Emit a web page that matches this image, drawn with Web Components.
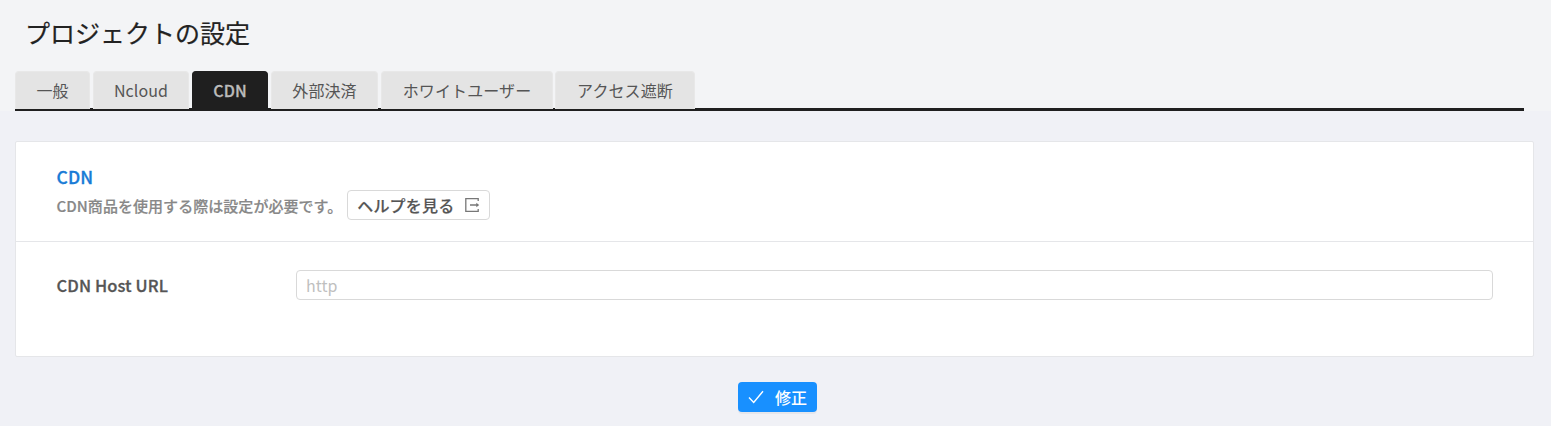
<!DOCTYPE html>
<html lang="ja">
<head>
<meta charset="utf-8">
<title>プロジェクトの設定</title>
<style>
html, body { margin: 0; }
body { background: #f0f1f6; font-family: "Noto Sans CJK JP", "Noto Sans", sans-serif; font-size: 16px; color: #555; height: 426px; overflow: hidden; }
</style>
</head>
<body>
<settings-page></settings-page>
<script>
function define(name, html) {
  const t = document.createElement('template');
  t.innerHTML = html;
  customElements.define(name, class extends HTMLElement {
    constructor() {
      super();
      this.attachShadow({ mode: 'open' }).append(t.content.cloneNode(true));
    }
  });
}

define('tab-item', `<style>
:host { display: block; box-sizing: border-box; width: var(--w); height: 38px; text-align: center; border: 1px solid #e8e8e8; border-bottom: 0; border-radius: 4px 4px 0 0; background: #e4e4e4; color: #555; line-height: 36px; letter-spacing: .1px; white-space: nowrap; }
:host([active]) { background: #1f1f1f; border-color: #1f1f1f; color: #bbb; font-weight: 500; -webkit-text-stroke: .3px; height: 39px; }
</style><slot></slot>`);

define('tab-bar', `<style>
:host { display: flex; gap: 3px; box-sizing: border-box; height: 40px; margin: 0 27px 0 15px; background: linear-gradient(#1f1f1f, #1f1f1f) 0 100% / 100% 3px no-repeat; }
</style><slot></slot>`);

define('page-header', `<style>
:host { display: block; height: 111px; background: #f3f4f6; }
h1 { margin: 0; height: 71px; box-sizing: border-box; padding: 13px 0 0 25px; font-size: 25px; line-height: 38px; font-weight: 400; color: #222; -webkit-text-stroke: .2px; }
</style><h1><slot name="title"></slot></h1><slot></slot>`);

define('settings-card', `<style>
:host { display: block; box-sizing: border-box; margin: 30px 17px 0 15px; height: 216px; background: #fff; border: 1px solid #e5e6e9; border-radius: 2px; }
header { box-sizing: border-box; height: 100px; padding: 22px 40px 0; border-bottom: 1px solid #e5e6e9; }
h2 { margin: 0; padding-left: .5px; color: #187bd6; font-size: 17.5px; line-height: 26px; font-weight: 500; letter-spacing: .1px; -webkit-text-stroke: .3px; }
.info { display: flex; align-items: center; gap: 5px; height: 30px; color: #888; font-size: 15px; font-weight: 500; letter-spacing: .05px; -webkit-text-stroke: .2px; }
.body { padding: 28px 40px 0; }
</style><header><h2><slot name="title"></slot></h2><div class="info"><slot name="info"></slot></div></header><div class="body"><slot></slot></div>`);

define('help-button', `<style>
:host { display: flex; align-items: center; box-sizing: border-box; width: 143px; height: 30px; padding: 0 9px; justify-content: space-between; border: 1px solid #d9d9d9; border-radius: 4px; background: #fff; color: #555; font-size: 16px; letter-spacing: .2px; line-height: 28px; white-space: nowrap; }
svg { display: block; width: 16px; height: 16px; }
</style><span><slot></slot></span><svg viewBox="0 0 16 16" fill="none" stroke="#777" stroke-width="1.3"><path d="M14.2 4V1.7H1.8v12.6h12.4V12M6 8h8"/><path d="M12.3 5.7 15.2 8l-2.9 2.3z" fill="#777" stroke="none"/></svg>`);

define('form-row', `<style>
:host { display: flex; align-items: center; height: 30px; }
label { box-sizing: border-box; width: 240px; padding-left: .5px; font-size: 16.5px; font-weight: 500; letter-spacing: .1px; -webkit-text-stroke: .3px; color: #555; }
input { flex: 1; box-sizing: border-box; width: 0; height: 30px; margin: 0; padding: 0 9px; border: 1px solid #d9d9d9; border-radius: 4px; background: #fff; font: inherit; outline: 0; }
input::placeholder { color: #bfbfbf; opacity: 1; }
</style><label><slot></slot></label><input placeholder="http">`);

define('submit-button', `<style>
:host { display: flex; align-items: center; box-sizing: border-box; width: 79px; height: 30px; margin: 25px auto 0 738px; padding: 0 10px; justify-content: space-between; border-radius: 4px; background: #1890ff; color: #fff; font-weight: 500; line-height: 30px; box-shadow: 0 2px 0 rgba(0,0,0,.045); }
svg { display: block; width: 16px; height: 16px; }
</style><svg viewBox="0 0 16 16" fill="none" stroke="#fff" stroke-width="1.4"><path d="M1 8.6 5.7 13.4 15 2.3"/></svg><span><slot></slot></span>`);

define('settings-page', `<style>
:host { display: block; }
.info-text { padding-left: .5px; }
</style>
<page-header><span slot="title">プロジェクトの設定</span>
<tab-bar><tab-item style="--w:75px">一般</tab-item><tab-item style="--w:96px">Ncloud</tab-item><tab-item active style="--w:76px">CDN</tab-item><tab-item style="--w:107px">外部決済</tab-item><tab-item style="--w:172px">ホワイトユーザー</tab-item><tab-item style="--w:140px;margin-left:-1px">アクセス遮断</tab-item></tab-bar>
</page-header>
<settings-card><span slot="title">CDN</span><span slot="info" class="info-text">CDN商品を使用する際は設定が必要です。</span><help-button slot="info">ヘルプを見る</help-button>
<form-row>CDN Host URL</form-row></settings-card>
<submit-button>修正</submit-button>`);
</script>
</body>
</html>
